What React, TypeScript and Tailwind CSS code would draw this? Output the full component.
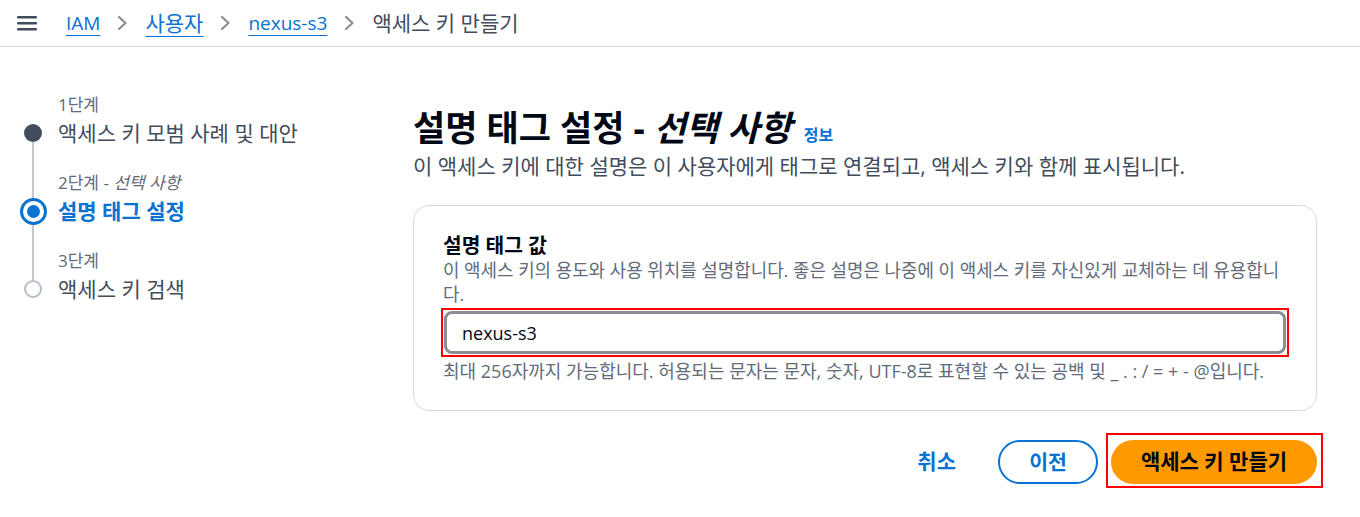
import React from 'react'

interface Step {
    label: string,
    optional?: boolean,
    title: string,
    state: 'done' | 'current' | 'todo'
}

const steps: Step[] = [
    { label: '1단계', title: '액세스 키 모범 사례 및 대안', state: 'done' },
    { label: '2단계', optional: true, title: '설명 태그 설정', state: 'current' },
    { label: '3단계', title: '액세스 키 검색', state: 'todo' },
]

const Chevron: React.FC = () => (
    <svg width="11" height="16" viewBox="0 0 11 16" fill="none">
        <path d="M2 2l6.5 6L2 14" stroke="#8c8c94" strokeWidth="2.2" strokeLinecap="round" strokeLinejoin="round" />
    </svg>
)

const StepDot: React.FC<{ state: Step['state'] }> = ({ state }) => {
    if (state === 'done') return <div className="w-[18px] h-[18px] rounded-full bg-[#414d5c] shrink-0" />
    if (state === 'current') {
        return (
            <div className="w-[27px] h-[27px] rounded-full border-[3px] border-[#0972d3] flex items-center justify-center shrink-0">
                <div className="w-[13px] h-[13px] rounded-full bg-[#0972d3]" />
            </div>
        )
    }
    return <div className="w-[18px] h-[18px] rounded-full border-2 border-[#b6bec9] bg-white shrink-0" />
}

const App: React.FC = () => {
    return (
        <div className="min-h-screen bg-white text-[#000716] font-['Open_Sans','Noto_Sans_CJK_KR',sans-serif]">
            {/* top bar */}
            <header className="h-[47px] border-b border-[#d5dbdb] flex items-center pl-[17px]">
                <svg width="20" height="16" viewBox="0 0 20 16">
                    <rect x="0" y="1" width="20" height="2.6" rx="1" fill="#414d5c" />
                    <rect x="0" y="7" width="20" height="2.6" rx="1" fill="#414d5c" />
                    <rect x="0" y="13" width="20" height="2.6" rx="1" fill="#414d5c" />
                </svg>
                <nav className="ml-[29px] flex items-center gap-[17px] text-[19px] leading-[26px]">
                    <a className="text-[#0972d3] underline decoration-1 underline-offset-[5px]">IAM</a>
                    <Chevron />
                    <a className="text-[21px] text-[#0972d3] underline decoration-1 underline-offset-[5px]">사용자</a>
                    <Chevron />
                    <a className="text-[#0972d3] underline decoration-1 underline-offset-[5px]">nexus-s3</a>
                    <Chevron />
                    <span className="text-[21px] text-[#414d5c]">액세스 키 만들기</span>
                </nav>
            </header>

            <div className="flex">
                {/* steps */}
                <div className="w-[413px] shrink-0 pl-[19px] pt-[46px]">
                    {steps.map((step, i) => {
                        const first = i === 0
                        const last = i === steps.length - 1
                        return (
                            <div key={step.label} className="flex gap-[11px]">
                                <div className="w-[28px] flex flex-col items-center">
                                    <div className={`w-[2px] h-[24px] ${first ? '' : 'bg-[#c6c6cd]'}`} />
                                    <div className="h-[32px] flex flex-col items-center">
                                        <div className={`w-[2px] flex-1 ${first ? '' : 'bg-[#c6c6cd]'}`} />
                                        <StepDot state={step.state} />
                                        <div className={`w-[2px] flex-1 ${last ? '' : 'bg-[#c6c6cd]'}`} />
                                    </div>
                                    <div className={`w-[2px] flex-1 ${last ? '' : 'bg-[#c6c6cd]'}`} />
                                </div>
                                <div className={last ? '' : 'pb-[22px]'}>
                                    <div className="h-[24px] leading-[24px] text-[17px] text-[#5f6b7a]">
                                        {step.label}
                                        {step.optional && <> - <i>선택 사항</i></>}
                                    </div>
                                    <div className={`h-[32px] leading-[32px] text-[21px] ${step.state === 'current' ? 'font-bold text-[#0972d3]' : 'text-[#414d5c]'}`}>
                                        {step.title}
                                    </div>
                                </div>
                            </div>
                        )
                    })}
                </div>

                {/* main */}
                <main className="w-[904px] shrink-0 pt-[59px]">
                    <div className="flex items-baseline gap-[12px]">
                        <h1 className="text-[35px] leading-[44px] font-bold">설명 태그 설정 - <i>선택 사항</i></h1>
                        <a className="text-[16px] font-bold text-[#0972d3]">정보</a>
                    </div>
                    <p className="mt-[2px] text-[21px] leading-[28px] text-[#414d5c]">
                        이 액세스 키에 대한 설명은 이 사용자에게 태그로 연결되고, 액세스 키와 함께 표시됩니다.
                    </p>

                    <div className="mt-[25px] border border-[#d5dbdb] rounded-[16px] px-[29px] pt-[26px] pb-[27px]">
                        <label className="block text-[20.3px] leading-[26px] font-bold">설명 태그 값</label>
                        <p className="text-[17.9px] leading-[24px] text-[#5f6b7a]">
                            이 액세스 키의 용도와 사용 위치를 설명합니다. 좋은 설명은 나중에 이 액세스 키를 자신있게 교체하는 데 유용합니다.
                        </p>
                        <div className="mt-[2px] -mx-[2px] border-2 border-[#ff0000] p-[1px]">
                            <input
                                type="text"
                                defaultValue="nexus-s3"
                                className="w-full h-[43px] rounded-[8px] border-[3px] border-[#8c8c94] pl-[15px] text-[18px] text-[#000716] outline-none"
                            />
                        </div>
                        <p className="mt-[2px] text-[18px] leading-[24px] text-[#5f6b7a]">
                            최대 256자까지 가능합니다. 허용되는 문자는 문자, 숫자, UTF-8로 표현할 수 있는 공백 및 _ . : / = + - @입니다.
                        </p>
                    </div>

                    <div className="mt-[29px] flex justify-end items-center gap-[13px]">
                        <button className="pl-[21px] pr-[29px] h-[44px] text-[21px] font-bold text-[#0972d3]">취소</button>
                        <button className="w-[100px] h-[44px] rounded-full border-2 border-[#0972d3] text-[20.5px] font-bold text-[#0972d3]">이전</button>
                        <div className="relative">
                            <button className="w-[206px] h-[44px] rounded-full bg-[#ff9900] text-[21px] font-bold text-[#000716]">
                                액세스 키 만들기
                            </button>
                            <span className="absolute -top-[7px] -bottom-[4px] -left-[5px] -right-[6px] border-2 border-[#ff0000] pointer-events-none" />
                        </div>
                    </div>
                </main>
            </div>
        </div>
    )
}

export default App
